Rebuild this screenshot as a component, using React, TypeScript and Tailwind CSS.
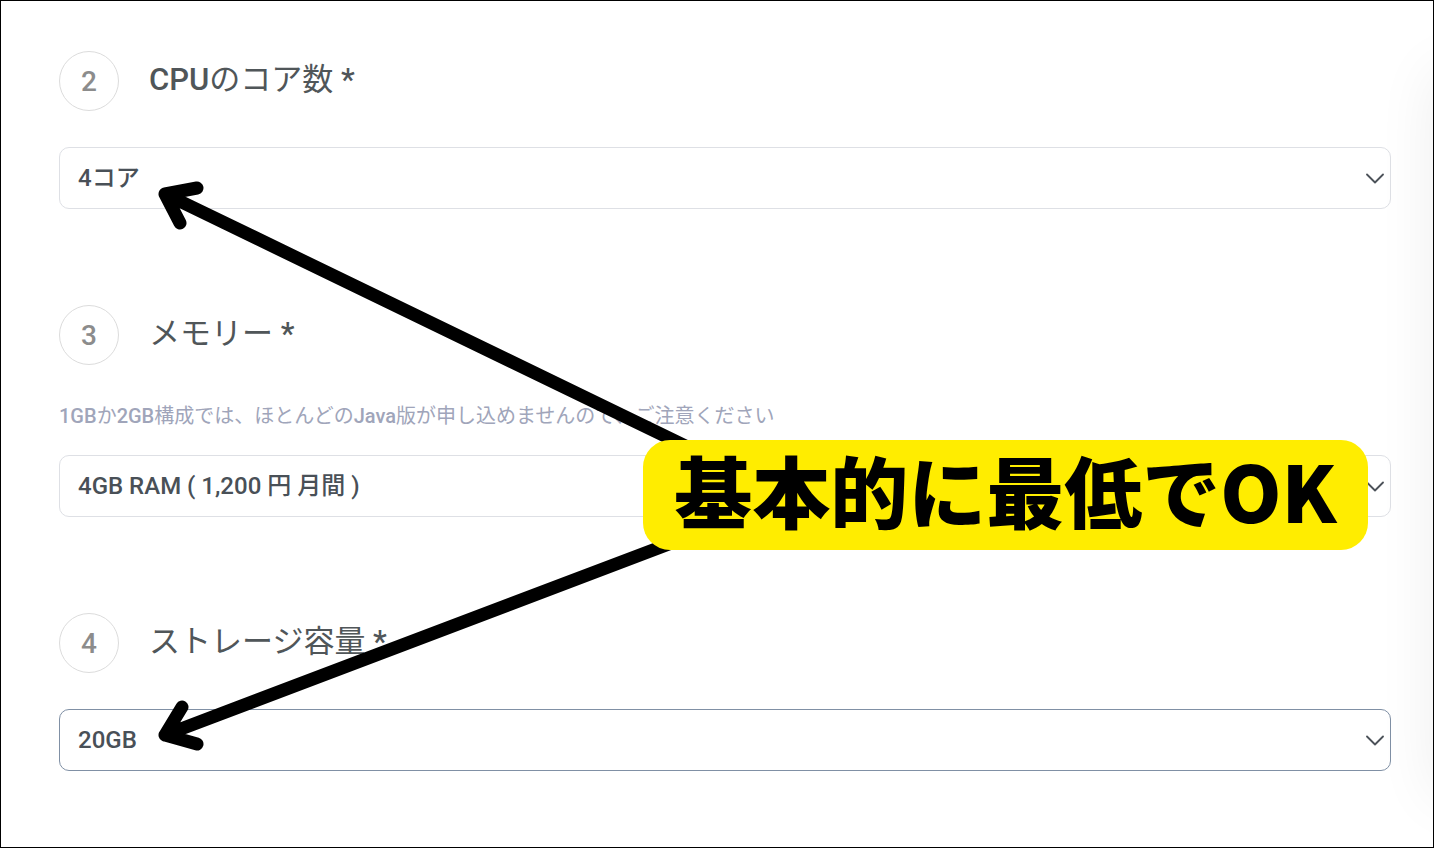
type Step = {
  id: string
  number: number
  title: string
  note?: string
  options: string[]
  active?: boolean
}

const steps: Step[] = [
  {
    id: 'cpu',
    number: 2,
    title: 'CPUのコア数 *',
    options: ['4コア'],
  },
  {
    id: 'memory',
    number: 3,
    title: 'メモリー *',
    note: '1GBか2GB構成では、ほとんどのJava版が申し込めませんので、ご注意ください',
    options: ['4GB RAM ( 1,200 円 月間 )'],
  },
  {
    id: 'storage',
    number: 4,
    title: 'ストレージ容量 *',
    options: ['20GB'],
    active: true,
  },
]

// Latin runs are set one weight heavier than the Japanese around them
function MixedText({ text }: { text: string }) {
  return (
    <>
      {text.split(/([\w*]+)/).map((part, idx) => (
        <span key={idx} className={idx % 2 ? 'font-medium' : 'font-normal'}>
          {part}
        </span>
      ))}
    </>
  )
}

function StepField({ step }: { step: Step }) {
  return (
    <section>
      <div className="flex items-center gap-[30px]">
        <span className="flex h-[60px] w-[60px] shrink-0 items-center justify-center rounded-full border border-[#dcdcdc] pt-0.5 text-[28px] leading-none font-medium text-[#8c8c8c]">
          {step.number}
        </span>
        <label htmlFor={step.id} className="pb-0.5 text-[31px] leading-10 text-[#505659]">
          <MixedText text={step.title} />
        </label>
      </div>
      {step.note && (
        <p className="mt-9 -mb-1 text-[20px] leading-[30px] text-[#a0a5ba]">
          <MixedText text={step.note} />
        </p>
      )}
      <div className={step.note ? 'relative mt-7' : 'relative mt-9'}>
        <select
          id={step.id}
          className={
            'h-[62px] w-full appearance-none rounded-[10px] border bg-white pr-12 pl-[18px] text-[24px] font-medium text-[#495057] outline-none ' +
            (step.active ? 'border-[#8090a5]' : 'border-[#dee0e5]')
          }
        >
          {step.options.map((option) => (
            <option key={option}>{option}</option>
          ))}
        </select>
        <svg
          className="pointer-events-none absolute top-[26px] right-[7px] h-[11px] w-[18px]"
          viewBox="0 0 18 11"
          fill="none"
          stroke="#4c5259"
          strokeWidth="1.8"
          strokeLinecap="round"
          strokeLinejoin="round"
        >
          <path d="M1 1.5 9 9.5 17 1.5" />
        </svg>
      </div>
    </section>
  )
}

export default function App() {
  return (
    <main
      lang="ja"
      className="relative min-h-screen overflow-hidden border border-black bg-white pt-[50px] pr-[42px] pb-[76px] pl-[58px] font-[Roboto,'Noto_Sans_CJK_JP',sans-serif]"
    >
      <div className="flex flex-col gap-24">
        {steps.map((step) => (
          <StepField key={step.id} step={step} />
        ))}
      </div>

      {/* Shadow of the neighbouring panel */}
      <div className="pointer-events-none absolute top-[70px] bottom-[50px] left-full w-20 shadow-[0_0_60px_rgba(0,0,0,0.07)]" />

      {/* Arrows */}
      <svg
        className="pointer-events-none absolute inset-0 h-full w-full"
        fill="none"
        stroke="#000"
        strokeWidth="13"
        strokeLinecap="round"
        strokeLinejoin="round"
      >
        <path d="M699 452 164 193M196 187 164 193 179 222" />
        <path d="M689 535 164 734M181 706 164 734 196 743" />
      </svg>

      {/* Callout */}
      <p className="absolute top-[439px] right-[65px] flex h-[110px] w-[725px] items-center justify-center rounded-[27px] bg-[#ffed00] pb-3 font-['Noto_Sans_CJK_JP',sans-serif] text-[78px] leading-none font-black whitespace-nowrap text-black">
        基本的に最低でOK
      </p>
    </main>
  )
}
